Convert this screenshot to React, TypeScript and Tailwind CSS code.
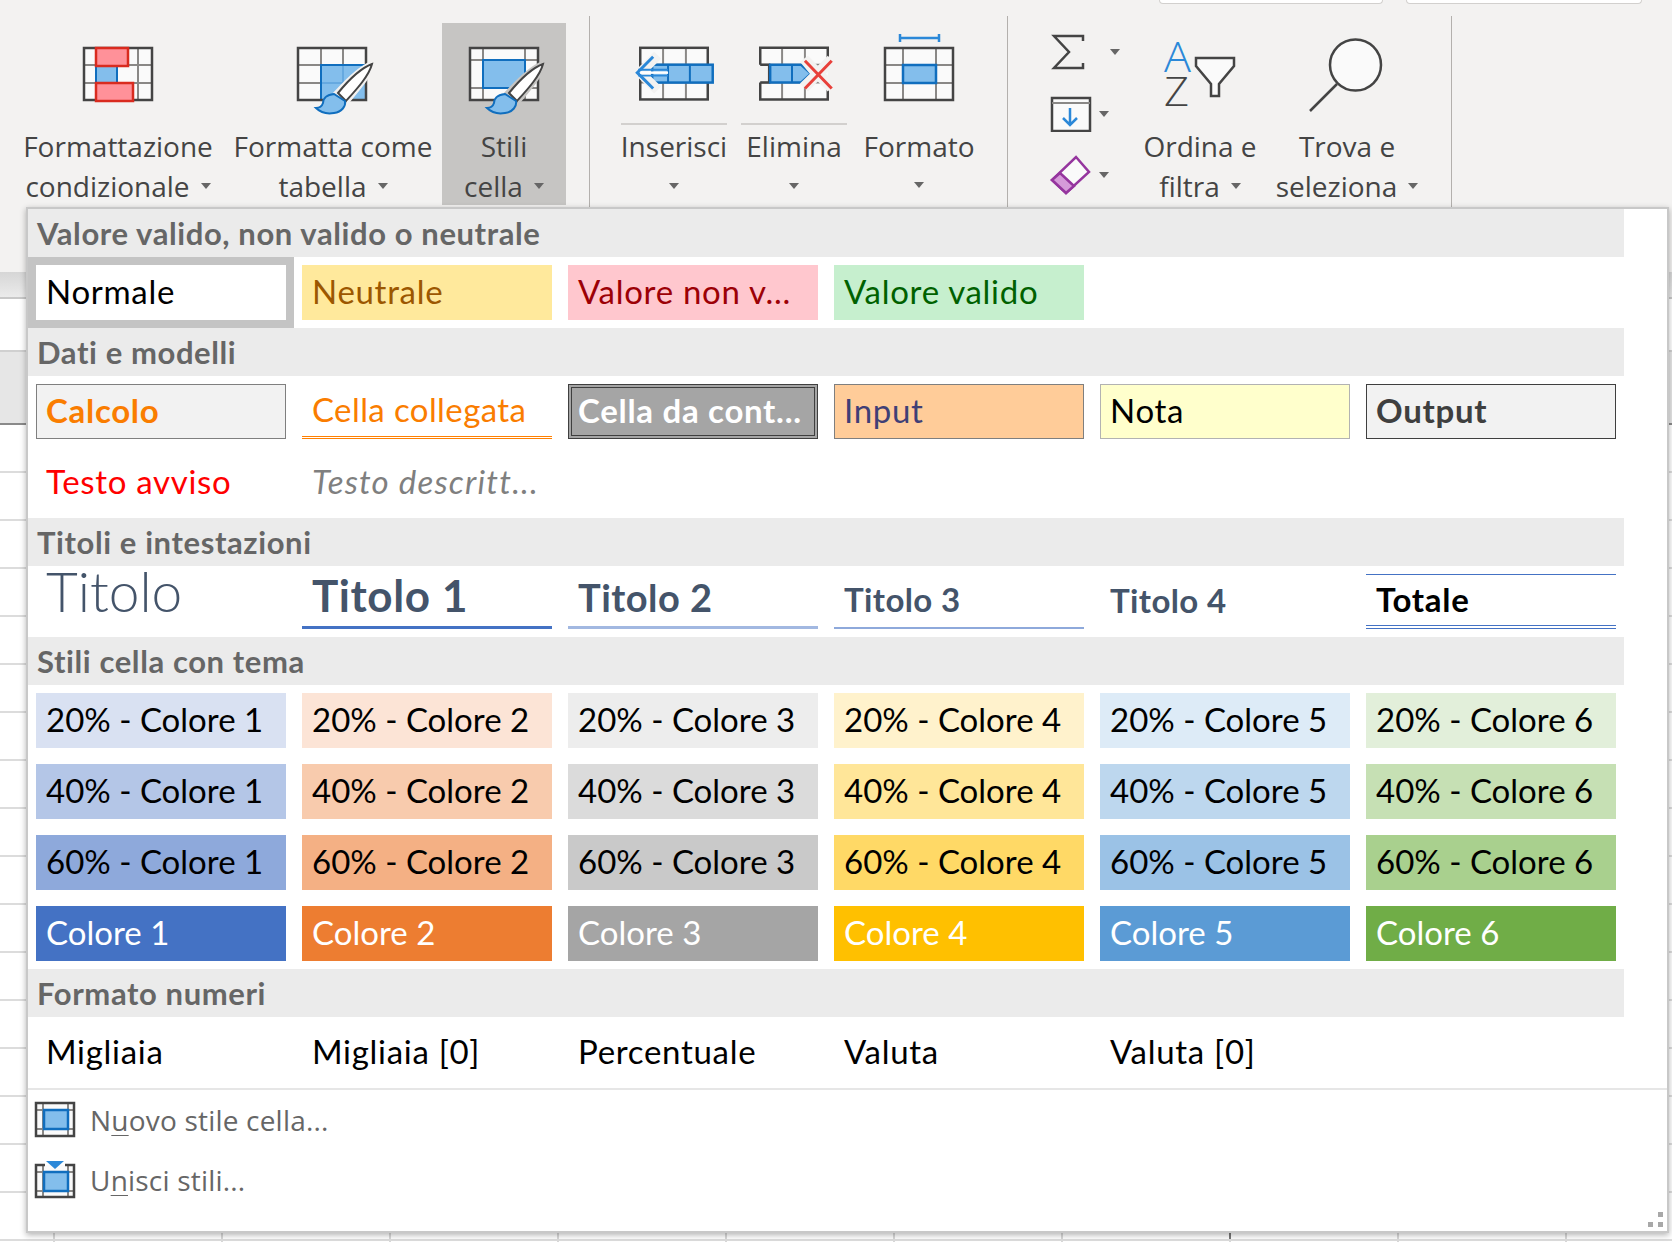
import React from 'react';

const DARK = '#444444';
const GRID = '#8a8886';
const BLUE_FILL = '#83beec';
const BLUE_LINE = '#106ebe';
const ARROW = '#2b88d8';
const PAPER = '#fafafa';

const uiFont = "[font-family:'Open_Sans',sans-serif]";

// Drop-down triangle used all over the ribbon
const Caret = () => (
  <svg width="10" height="6" viewBox="0 0 10 6" className="shrink-0">
    <path d="M0 0H10L5 6Z" fill="#666666" />
  </svg>
);

const Brush = ({ dx, halo }: { dx: number; halo: string }) => (
  <g transform={`translate(${dx} 0)`}>
    <path d="M371 64C360 68 346 82 336 93L345 102C355 90 368 76 371 64Z" fill={halo} stroke={halo} strokeWidth="6" />
    <path d="M371 64C360 68 346 82 337 93L345 101C355 90 368 76 371 64Z" fill="#ffffff" stroke={DARK} strokeWidth="2" />
    <path d="M333 94C324 95 322 100 322 103C321 106 319 108 315 108C320 113 327 114 333 113C341 112 345 106 344 101Z" fill={BLUE_FILL} stroke={BLUE_LINE} strokeWidth="2" />
  </g>
);

const ConditionalIcon = () => (
  <svg width="220" height="103" viewBox="8 23 220 103">
    <rect x="84" y="48" width="68" height="52" fill={PAPER} />
    <path d="M117 48V100M138 48V100M84 65H152M84 83H152" stroke={GRID} strokeWidth="2" fill="none" />
    <rect x="96" y="65" width="21" height="18" fill={BLUE_FILL} stroke={BLUE_LINE} strokeWidth="2" />
    <rect x="84" y="48" width="68" height="52" fill="none" stroke={DARK} strokeWidth="2.5" />
    <rect x="96" y="48" width="32" height="18" fill="#ff9199" stroke="#d92b1f" strokeWidth="2.5" />
    <rect x="96" y="83" width="37" height="18" fill="#ff9199" stroke="#d92b1f" strokeWidth="2.5" />
  </svg>
);

const TableIcon = () => (
  <svg width="210" height="103" viewBox="228 23 210 103">
    <rect x="298" y="48" width="68" height="52" fill={PAPER} />
    <path d="M321 48V100M343 48V100M298 65H366M298 83H366" stroke={GRID} strokeWidth="2" fill="none" />
    <rect x="321" y="65" width="45" height="35" fill={BLUE_FILL} stroke={BLUE_LINE} strokeWidth="2" />
    <path d="M343 65V100M321 83H366" stroke={BLUE_LINE} strokeWidth="1" opacity="0.5" />
    <rect x="298" y="48" width="68" height="52" fill="none" stroke={DARK} strokeWidth="2.5" />
    <Brush dx={1} halo="#f3f2f1" />
  </svg>
);

const CellStyleIcon = () => (
  <svg width="124" height="103" viewBox="442 23 124 103">
    <rect x="470" y="48" width="68" height="52" fill={PAPER} />
    <path d="M483 48V100M525 48V100M470 60H538M470 88H538" stroke={GRID} strokeWidth="2" fill="none" />
    <rect x="483" y="60" width="42" height="28" fill={BLUE_FILL} stroke={BLUE_LINE} strokeWidth="2" />
    <rect x="470" y="48" width="68" height="52" fill="none" stroke={DARK} strokeWidth="2.5" />
    <Brush dx={172} halo="#c6c5c3" />
  </svg>
);

const InsertIcon = () => (
  <svg width="106" height="101" viewBox="621 23 106 101">
    <rect x="640" y="48" width="68" height="52" fill={PAPER} />
    <path d="M663 48V100M686 48V100M640 65H708M640 83H708" stroke={GRID} strokeWidth="2" fill="none" />
    <rect x="640" y="48" width="68" height="52" fill="none" stroke={DARK} strokeWidth="2.5" />
    <rect x="652" y="65" width="61" height="18" fill={BLUE_FILL} stroke={BLUE_LINE} strokeWidth="2.5" />
    <path d="M668 65V83M690 65V83" stroke={BLUE_LINE} strokeWidth="2" />
    <path d="M633 73L654 52L661 59L647 73L661 87L654 94Z" fill="#f3f2f1" />
    <path d="M653 57L637 73L653 89" fill="none" stroke={ARROW} strokeWidth="3" />
    <path d="M638 70H668M638 76H668" stroke={ARROW} strokeWidth="2" />
    <path d="M640 73H668" stroke="#ffffff" strokeWidth="2.5" />
  </svg>
);

const DeleteIcon = () => (
  <svg width="106" height="101" viewBox="741 23 106 101">
    <rect x="760" y="48" width="68" height="52" fill={PAPER} />
    <path d="M782 48V100M805 48V100M760 65H828M760 83H828" stroke={GRID} strokeWidth="2" fill="none" />
    <path d="M760 65V48H828V65M828 83V100H760V83" fill="none" stroke={DARK} strokeWidth="2.5" />
    <rect x="755" y="66" width="14" height="16" fill="#f3f2f1" />
    <path d="M760 65H769V83H760" fill="none" stroke={DARK} strokeWidth="2.5" />
    <path d="M770 65H801L811 74L801 83H770Z" fill={BLUE_FILL} stroke={BLUE_LINE} strokeWidth="2.5" />
    <path d="M792 65V83" stroke={BLUE_LINE} strokeWidth="2" />
    <path d="M800 62L808 56L818 66L828 56L836 64L826 74L836 84L828 92L818 82L808 92L800 84L810 74Z" fill="#f3f2f1" />
    <path d="M805 61L832 89M832 61L805 89" stroke="#e8403a" strokeWidth="3" />
  </svg>
);

const FormatIcon = () => (
  <svg width="118" height="103" viewBox="860 23 118 103">
    <path d="M900 38H939M900 34V42M939 34V42" fill="none" stroke={ARROW} strokeWidth="2.5" />
    <rect x="885" y="48" width="68" height="52" fill={PAPER} />
    <path d="M903 48V100M936 48V100M885 65H953M885 83H953" stroke={GRID} strokeWidth="2" fill="none" />
    <rect x="885" y="48" width="68" height="52" fill="none" stroke={DARK} strokeWidth="2.5" />
    <rect x="903" y="65" width="33" height="18" fill={BLUE_FILL} stroke={BLUE_LINE} strokeWidth="2.5" />
  </svg>
);

const SumIcon = () => (
  <svg width="36" height="38" viewBox="1049 33 36 38">
    <path d="M1082 41V36H1053L1068 52L1053 68H1082V63" fill="none" stroke={DARK} strokeWidth="2.5" />
  </svg>
);

const FillIcon = () => (
  <svg width="42" height="36" viewBox="1049 96 42 36">
    <rect x="1051" y="98" width="38" height="33" fill={PAPER} stroke={DARK} strokeWidth="2.5" />
    <path d="M1051 103H1089" stroke={GRID} strokeWidth="2" />
    <path d="M1069 108V125M1062 118L1069 125L1076 118" fill="none" stroke={ARROW} strokeWidth="2.5" />
  </svg>
);

const EraserIcon = () => (
  <svg width="42" height="40" viewBox="1049 155 42 40">
    <path d="M1075 157L1088 172L1065 193L1051 180Z" fill={PAPER} stroke="#95359e" strokeWidth="2.5" />
    <path d="M1059 173L1073 186L1065 193L1051 180Z" fill="#d59ad9" stroke="#95359e" strokeWidth="2.5" />
  </svg>
);

const SortIcon = () => (
  <svg width="140" height="103" viewBox="1131 23 140 103">
    <text x="1165" y="72" fontSize="43" fill={ARROW} textLength="27" lengthAdjust="spacingAndGlyphs" fontFamily="'Open Sans',sans-serif" fontWeight="300">A</text>
    <text x="1165" y="106" fontSize="41" fill={DARK} textLength="25" lengthAdjust="spacingAndGlyphs" fontFamily="'Open Sans',sans-serif" fontWeight="300">Z</text>
    <path d="M1197 58H1235V66L1220 84V96H1212V84L1197 66Z" fill={PAPER} stroke={DARK} strokeWidth="2.5" />
  </svg>
);

const FindIcon = () => (
  <svg width="150" height="103" viewBox="1273 23 150 103">
    <path d="M1338 84L1311 111" stroke={DARK} strokeWidth="2.5" />
    <circle cx="1356.500" cy="65" r="25.500" fill={PAPER} stroke={DARK} strokeWidth="2.500" />
  </svg>
);

const NewStyleIcon = () => (
  <svg width="42" height="38" viewBox="34 1101 42 38">
    <rect x="36" y="1103" width="38" height="33" fill={PAPER} />
    <path d="M43 1103V1136M68 1103V1136M36 1110H74M36 1129H74" stroke={GRID} strokeWidth="2" />
    <rect x="44" y="1110" width="24" height="19" fill={BLUE_FILL} stroke={BLUE_LINE} strokeWidth="2.500" />
    <rect x="36" y="1103" width="38" height="33" fill="none" stroke={DARK} strokeWidth="2.500" />
  </svg>
);

const MergeStylesIcon = () => (
  <svg width="42" height="40" viewBox="34 1159 42 40">
    <rect x="36" y="1164" width="38" height="32" fill={PAPER} />
    <path d="M43 1164V1196M68 1164V1196M36 1171H74M36 1190H74" stroke={GRID} strokeWidth="2" />
    <rect x="44" y="1171" width="24" height="19" fill={BLUE_FILL} stroke={BLUE_LINE} strokeWidth="2.500" />
    <path d="M45 1164H36V1196H74V1164H65" fill="none" stroke={DARK} strokeWidth="2.500" />
    <path d="M46 1160H64L55 1168Z" fill={ARROW} />
  </svg>
);

const RibbonButton = ({ icon, lines, className }: { icon: React.ReactNode; lines: string[]; className: string }) => (
  <div className={`h-[182px] shrink-0 flex flex-col items-center text-[28px] leading-[40px] text-[#444444] ${className}`}>
    <div className="h-[103px]">{icon}</div>
    <div className="whitespace-nowrap">{lines[0]}</div>
    <div className="flex items-center gap-[11px] whitespace-nowrap">
      {lines[1]}
      <Caret />
    </div>
  </div>
);

const CellButton = ({ icon, label, className, ruled }: { icon: React.ReactNode; label: string; className: string; ruled?: boolean }) => (
  <div className={`h-[182px] shrink-0 flex flex-col items-center text-[28px] leading-[40px] text-[#444444] ${className}`}>
    {icon}
    {ruled && <div className="h-[2px] w-full bg-[#d2d0ce] mb-[1px]" />}
    <div className="whitespace-nowrap">{label}</div>
    <div className={`flex items-center ${ruled ? 'h-[39px]' : 'h-[37px]'}`}>
      <Caret />
    </div>
  </div>
);

const Separator = ({ className }: { className: string }) => (
  <div className={`w-[1px] h-[191px] mt-[12px] bg-[#b3b0ad] shrink-0 ${className}`} />
);

const Ribbon = () => (
  <div className={`h-[272px] bg-[#f3f2f1] ${uiFont}`}>
    <div className="h-[4px] flex justify-end gap-[23px] pr-[30px]">
      <div className="w-[224px] bg-white border border-t-0 border-[#d2d0ce] rounded-b-[5px]" />
      <div className="w-[236px] bg-white border border-t-0 border-[#d2d0ce] rounded-b-[5px]" />
    </div>
    <div className="flex items-start h-[203px]">
      <div className="flex mt-[19px] ml-[8px]">
        <RibbonButton icon={<ConditionalIcon />} lines={['Formattazione', 'condizionale']} className="w-[220px]" />
        <RibbonButton icon={<TableIcon />} lines={['Formatta come', 'tabella']} className="w-[210px]" />
        <RibbonButton icon={<CellStyleIcon />} lines={['Stili', 'cella']} className="w-[124px] ml-[4px] bg-[#c6c5c3]" />
      </div>
      <Separator className="ml-[23px]" />
      <div className="flex mt-[19px] ml-[31px]">
        <CellButton icon={<InsertIcon />} label="Inserisci" className="w-[106px]" ruled />
        <CellButton icon={<DeleteIcon />} label="Elimina" className="w-[106px] ml-[14px]" ruled />
        <CellButton icon={<FormatIcon />} label="Formato" className="w-[118px] ml-[13px]" />
      </div>
      <Separator className="ml-[29px]" />
      <div className="w-[80px] ml-[42px] mt-[29px] shrink-0 flex flex-col">
        <div className="flex items-center gap-[24px]"><SumIcon /><Caret /></div>
        <div className="flex items-center gap-[7px] mt-[25px]"><FillIcon /><Caret /></div>
        <div className="flex items-center gap-[7px] mt-[23px]"><EraserIcon /><Caret /></div>
      </div>
      <div className="flex mt-[19px]">
        <RibbonButton icon={<SortIcon />} lines={['Ordina e', 'filtra']} className="w-[140px]" />
        <RibbonButton icon={<FindIcon />} lines={['Trova e', 'seleziona']} className="w-[150px] ml-[2px]" />
      </div>
      <Separator className="ml-[29px]" />
    </div>
  </div>
);

const Worksheet = () => {
  const widths = ['w-[168px]', 'w-[168px]', 'w-[168px]', 'w-[168px]', 'w-[168px]', 'w-[168px]', 'w-[168px]', 'w-[168px]', 'w-[168px]', 'w-[168px]', 'w-[60px]', 'w-[3px]', 'w-[39px]', 'w-[4px]'];
  return (
    <div className="bg-white">
      <div className="h-[27px] bg-gradient-to-b from-[#d6d6d6] to-[#ebebeb] border-b-2 border-[#c8c8c8]" />
      <div className="h-[53px] border-b-2 border-[#d0d0d0]" />
      <div className="h-[73px] bg-[#e6e6e6] border-b-2 border-[#8a8a8a]" />
      {Array.from({ length: 16 }, (_, i) => (
        <div key={i} className="h-[48px] border-b-2 border-[#dcdcdc]" />
      ))}
      {[0, 1].map(row => (
        <div key={row} className="h-[48px] border-b-2 border-[#dcdcdc] flex pl-[53px]">
          {widths.map((w, i) => (
            <div key={i} className={`h-full shrink-0 border-l-2 ${i === 7 && row === 0 ? 'border-[#777777]' : 'border-[#d8d8d8]'} ${w}`} />
          ))}
        </div>
      ))}
    </div>
  );
};

const layout = 'flex items-center whitespace-nowrap leading-none';
const cell = `${layout} pl-[10px] text-[33px] tracking-[0.7px] pb-[2px]`;
const boxedCell = `${layout} pl-[9px] text-[33px] tracking-[0.7px] pb-[2px]`;
const themeCell = `${layout} pl-[10px] text-[33px] pb-[2px]`;
const headingCell = `${layout} pl-[10px] text-[33px] tracking-[0.4px] pb-[2px]`;

const Section = ({ title, children }: { title: string; children: React.ReactNode }) => (
  <div>
    <div className="w-[1596px] h-[48px] bg-[#ebebeb] flex items-center pl-[9px] text-[31px] tracking-[0.6px] font-bold text-[#666666]">{title}</div>
    <div className="grid grid-cols-[repeat(6,250px)] auto-rows-[55px] gap-4 p-2">{children}</div>
  </div>
);

const themeRows = [
  { pct: '20% - ', cells: ['bg-[#d9e1f2]', 'bg-[#fce4d6]', 'bg-[#ededed]', 'bg-[#fff2cc]', 'bg-[#ddebf7]', 'bg-[#e2efda]'] },
  { pct: '40% - ', cells: ['bg-[#b4c6e7]', 'bg-[#f8cbad]', 'bg-[#dbdbdb]', 'bg-[#ffe699]', 'bg-[#bdd7ee]', 'bg-[#c6e0b4]'] },
  { pct: '60% - ', cells: ['bg-[#8ea9db]', 'bg-[#f4b084]', 'bg-[#c9c9c9]', 'bg-[#ffd966]', 'bg-[#9bc2e6]', 'bg-[#a9d08e]'] },
  { pct: '', cells: ['bg-[#4472c4]', 'bg-[#ed7d31]', 'bg-[#a5a5a5]', 'bg-[#ffc000]', 'bg-[#5b9bd5]', 'bg-[#70ad47]'] },
];

const StylePanel = () => (
  <div className="absolute left-[26px] top-[207px] w-[1643px] h-[1026px] bg-white border-2 border-[#c8c8c8] shadow-[0_2px_6px_rgba(0,0,0,0.3)] text-black [font-family:Lato,sans-serif]">
    <Section title="Valore valido, non valido o neutrale">
      <div className={`${cell} bg-white outline-[8px] outline-[#c4c4c4]`}>Normale</div>
      <div className={`${cell} bg-[#ffe99c] text-[#9c5700]`}>Neutrale</div>
      <div className={`${cell} bg-[#ffc7ce] text-[#9c0006]`}>Valore non v...</div>
      <div className={`${cell} bg-[#c6efce] text-[#006100]`}>Valore valido</div>
    </Section>
    <Section title="Dati e modelli">
      <div className={`${boxedCell} bg-[#f2f2f2] text-[#fa7d00] font-bold border border-[#7f7f7f]`}>Calcolo</div>
      <div className={`${layout} pl-[10px] text-[33px] tracking-[0.4px] pb-[2px] text-[#fa7d00] border-b-[3px] border-double border-[#ff8001]`}>Cella collegata</div>
      <div className={`${layout} pl-[6px] text-[33px] tracking-[0.7px] pb-[2px] bg-[#a5a5a5] text-white font-bold border-[4px] border-double border-[#3f3f3f]`}>Cella da cont...</div>
      <div className={`${boxedCell} bg-[#ffcc99] text-[#3f3f76] border border-[#7f7f7f]`}>Input</div>
      <div className={`${boxedCell} bg-[#ffffcc] border border-[#b2b2b2]`}>Nota</div>
      <div className={`${boxedCell} bg-[#f2f2f2] text-[#3f3f3f] font-bold border border-[#3f3f3f]`}>Output</div>
      <div className={`${cell} text-[#ff0000]`}>Testo avviso</div>
      <div className={`${layout} pl-[10px] text-[33px] tracking-[1.2px] pb-[2px] text-[#7f7f7f] italic`}>Testo descritt...</div>
    </Section>
    <Section title="Titoli e intestazioni">
      <div className="pl-[10px] whitespace-nowrap text-[#44546a] text-[55px] leading-[35px] font-light">Titolo</div>
      <div className={`${layout} pl-[10px] text-[#44546a] text-[44px] tracking-[0.6px] pb-[10px] font-bold border-b-[3px] border-[#4472c4]`}>Titolo 1</div>
      <div className={`${layout} pl-[10px] text-[#44546a] text-[38px] tracking-[0.5px] pb-[6px] font-bold border-b-[3px] border-[#a2b8e1]`}>Titolo 2</div>
      <div className={`${headingCell} text-[#44546a] font-bold border-b-2 border-[#8ea9db]`}>Titolo 3</div>
      <div className={`${headingCell} text-[#44546a] font-bold`}>Titolo 4</div>
      <div className={`${cell} font-bold border-t border-b-[4px] border-double border-[#4472c4]`}>Totale</div>
    </Section>
    <Section title="Stili cella con tema">
      {themeRows.flatMap(row =>
        row.cells.map((bg, i) => (
          <div key={row.pct + i} className={`${themeCell} ${bg} ${row.pct === '' ? 'text-white' : ''}`}>
            {row.pct}Colore {i + 1}
          </div>
        ))
      )}
    </Section>
    <Section title="Formato numeri">
      <div className={cell}>Migliaia</div>
      <div className={cell}>Migliaia [0]</div>
      <div className={cell}>Percentuale</div>
      <div className={cell}>Valuta</div>
      <div className={cell}>Valuta [0]</div>
    </Section>
    <div className={`border-t-2 border-[#e6e6e6] text-[28px] tracking-[0.2px] text-[#666666] ${uiFont}`}>
      <div className="h-[60px] flex items-center gap-[14px] pl-[6px]">
        <NewStyleIcon />
        <span>N<span className="underline underline-offset-4 decoration-1">u</span>ovo stile cella...</span>
      </div>
      <div className="h-[60px] flex items-center gap-[14px] pl-[6px]">
        <MergeStylesIcon />
        <span>U<span className="underline underline-offset-4 decoration-1">n</span>isci stili...</span>
      </div>
    </div>
    <div className="absolute right-[4px] bottom-[4px] grid grid-cols-2 gap-[5px]">
      <div className="w-[5px] h-[5px]" />
      <div className="w-[5px] h-[5px] bg-[#a8a8a8]" />
      <div className="w-[5px] h-[5px] bg-[#a8a8a8]" />
      <div className="w-[5px] h-[5px] bg-[#a8a8a8]" />
    </div>
  </div>
);

export default function App() {
  return (
    <div className="relative w-[1672px] h-[1242px] overflow-hidden bg-white">
      <Ribbon />
      <Worksheet />
      <StylePanel />
    </div>
  );
}
